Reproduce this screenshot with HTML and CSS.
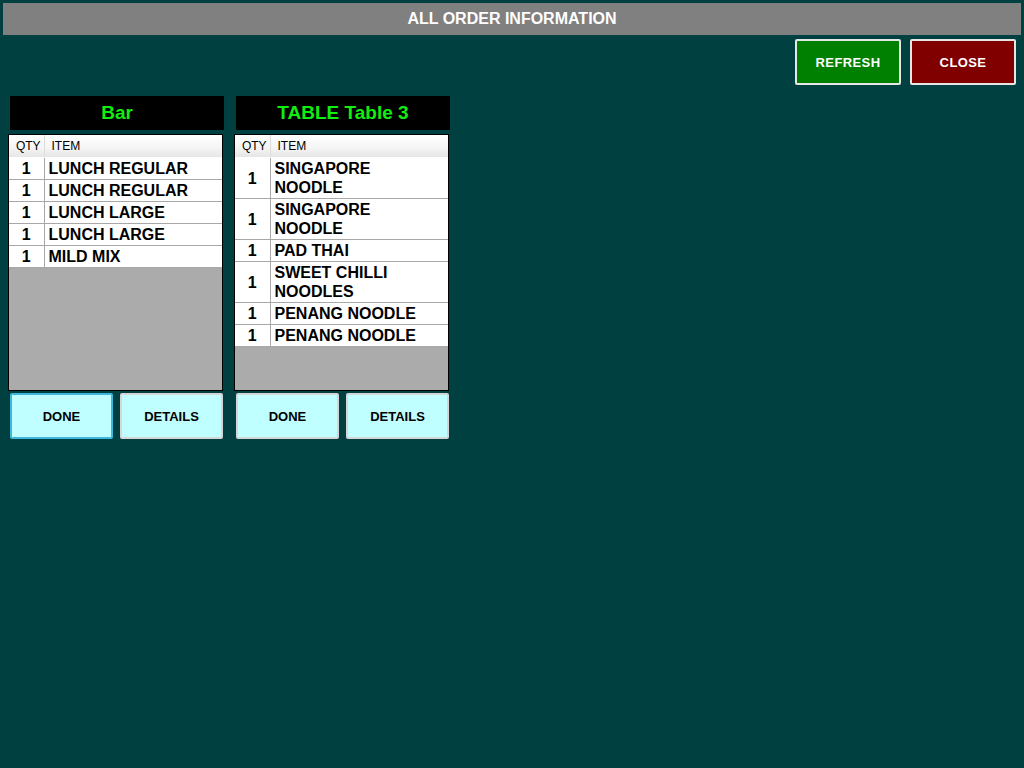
FILE: index.html
```html
<!DOCTYPE html>
<html lang="en">
<head>
  <meta charset="UTF-8">
  <title>All order information</title>
  <link rel="stylesheet" href="styles.css">
</head>
<body>
  <header class="title-bar">ALL ORDER INFORMATION</header>

  <div class="top-actions">
    <button class="btn-top btn-green">REFRESH</button>
    <button class="btn-top btn-red">CLOSE</button>
  </div>

  <main class="panels">
    <section class="panel">
      <div class="panel-header">Bar</div>
      <div class="order-list">
        <table>
          <thead>
            <tr><th class="qty">QTY</th><th class="item">ITEM</th></tr>
          </thead>
          <tbody>
            <tr><td class="qty">1</td><td class="item">LUNCH REGULAR</td></tr>
            <tr><td class="qty">1</td><td class="item">LUNCH REGULAR</td></tr>
            <tr><td class="qty">1</td><td class="item">LUNCH LARGE</td></tr>
            <tr><td class="qty">1</td><td class="item">LUNCH LARGE</td></tr>
            <tr><td class="qty">1</td><td class="item">MILD MIX</td></tr>
          </tbody>
        </table>
      </div>
      <div class="panel-actions">
        <button class="btn-cyan btn-focused">DONE</button>
        <button class="btn-cyan">DETAILS</button>
      </div>
    </section>

    <section class="panel">
      <div class="panel-header">TABLE Table 3</div>
      <div class="order-list">
        <table>
          <thead>
            <tr><th class="qty">QTY</th><th class="item">ITEM</th></tr>
          </thead>
          <tbody>
            <tr><td class="qty">1</td><td class="item">SINGAPORE NOODLE</td></tr>
            <tr><td class="qty">1</td><td class="item">SINGAPORE NOODLE</td></tr>
            <tr><td class="qty">1</td><td class="item">PAD THAI</td></tr>
            <tr><td class="qty">1</td><td class="item">SWEET CHILLI NOODLES</td></tr>
            <tr><td class="qty">1</td><td class="item">PENANG NOODLE</td></tr>
            <tr><td class="qty">1</td><td class="item">PENANG NOODLE</td></tr>
          </tbody>
        </table>
      </div>
      <div class="panel-actions">
        <button class="btn-cyan">DONE</button>
        <button class="btn-cyan">DETAILS</button>
      </div>
    </section>
  </main>
</body>
</html>
```

FILE: styles.css
```css
body {
  margin: 0;
  background-color: #004040;
  font-family: 'Liberation Sans', Arial, sans-serif;
  color: #000;
}

.title-bar {
  margin: 3px 3px 0 3px;
  height: 32px;
  line-height: 32px;
  background-color: #808080;
  color: #fff;
  font-size: 16px;
  font-weight: bold;
  text-align: center;
}

.top-actions {
  display: flex;
  justify-content: flex-end;
  gap: 9px;
  padding: 4px 8px 0 0;
}

.btn-top {
  width: 106px;
  height: 46px;
  border: 2px solid #e6e6e6;
  border-radius: 2px;
  color: #fff;
  font-family: inherit;
  font-size: 13px;
  font-weight: bold;
  letter-spacing: 0.4px;
  cursor: pointer;
}

.btn-green {
  background-color: #008000;
}

.btn-red {
  background-color: #800000;
}

.panels {
  display: flex;
  gap: 10px;
  padding-left: 8px;
  margin-top: 11px;
}

.panel {
  width: 216px;
}

.panel-header {
  margin-left: 2px;
  height: 34px;
  line-height: 34px;
  background-color: #000;
  color: #11ee11;
  font-size: 19px;
  font-weight: bold;
  text-align: center;
}

.order-list {
  box-sizing: border-box;
  width: 215px;
  height: 257px;
  margin-top: 4px;
  border: 1px solid #000;
  background-color: #ababab;
}

.order-list table {
  width: 100%;
  border-collapse: collapse;
  table-layout: fixed;
}

.order-list th {
  height: 22px;
  padding: 0;
  background: linear-gradient(#ffffff, #f4f4f4 60%, #e6e6e6);
  font-size: 12px;
  font-weight: normal;
  text-align: left;
  border-bottom: 1px solid #ffffff;
}

.order-list th.qty {
  width: 35px;
  padding-left: 4px;
  box-sizing: border-box;
  text-align: center;
  border-right: 1px solid #dcdcdc;
}

.order-list th.item {
  padding-left: 7px;
}

.order-list td {
  padding: 1px 0;
  background-color: #fff;
  border-bottom: 1px solid #a8a8a8;
  font-size: 16px;
  font-weight: bold;
  line-height: 19px;
}

.order-list td.qty {
  text-align: center;
  border-right: 1px solid #a8a8a8;
}

.order-list td.item {
  padding-left: 4px;
  padding-right: 10px;
}

.panel-actions {
  display: flex;
  gap: 7px;
  margin: 2px 0 0 2px;
}

.btn-cyan {
  width: 103px;
  height: 46px;
  background-color: #c0ffff;
  border: 2px solid #d6d6d6;
  border-radius: 2px;
  font-family: inherit;
  font-size: 13px;
  font-weight: bold;
  color: #000;
  cursor: pointer;
}

.btn-focused {
  border-color: #3cb8dc;
}
```
